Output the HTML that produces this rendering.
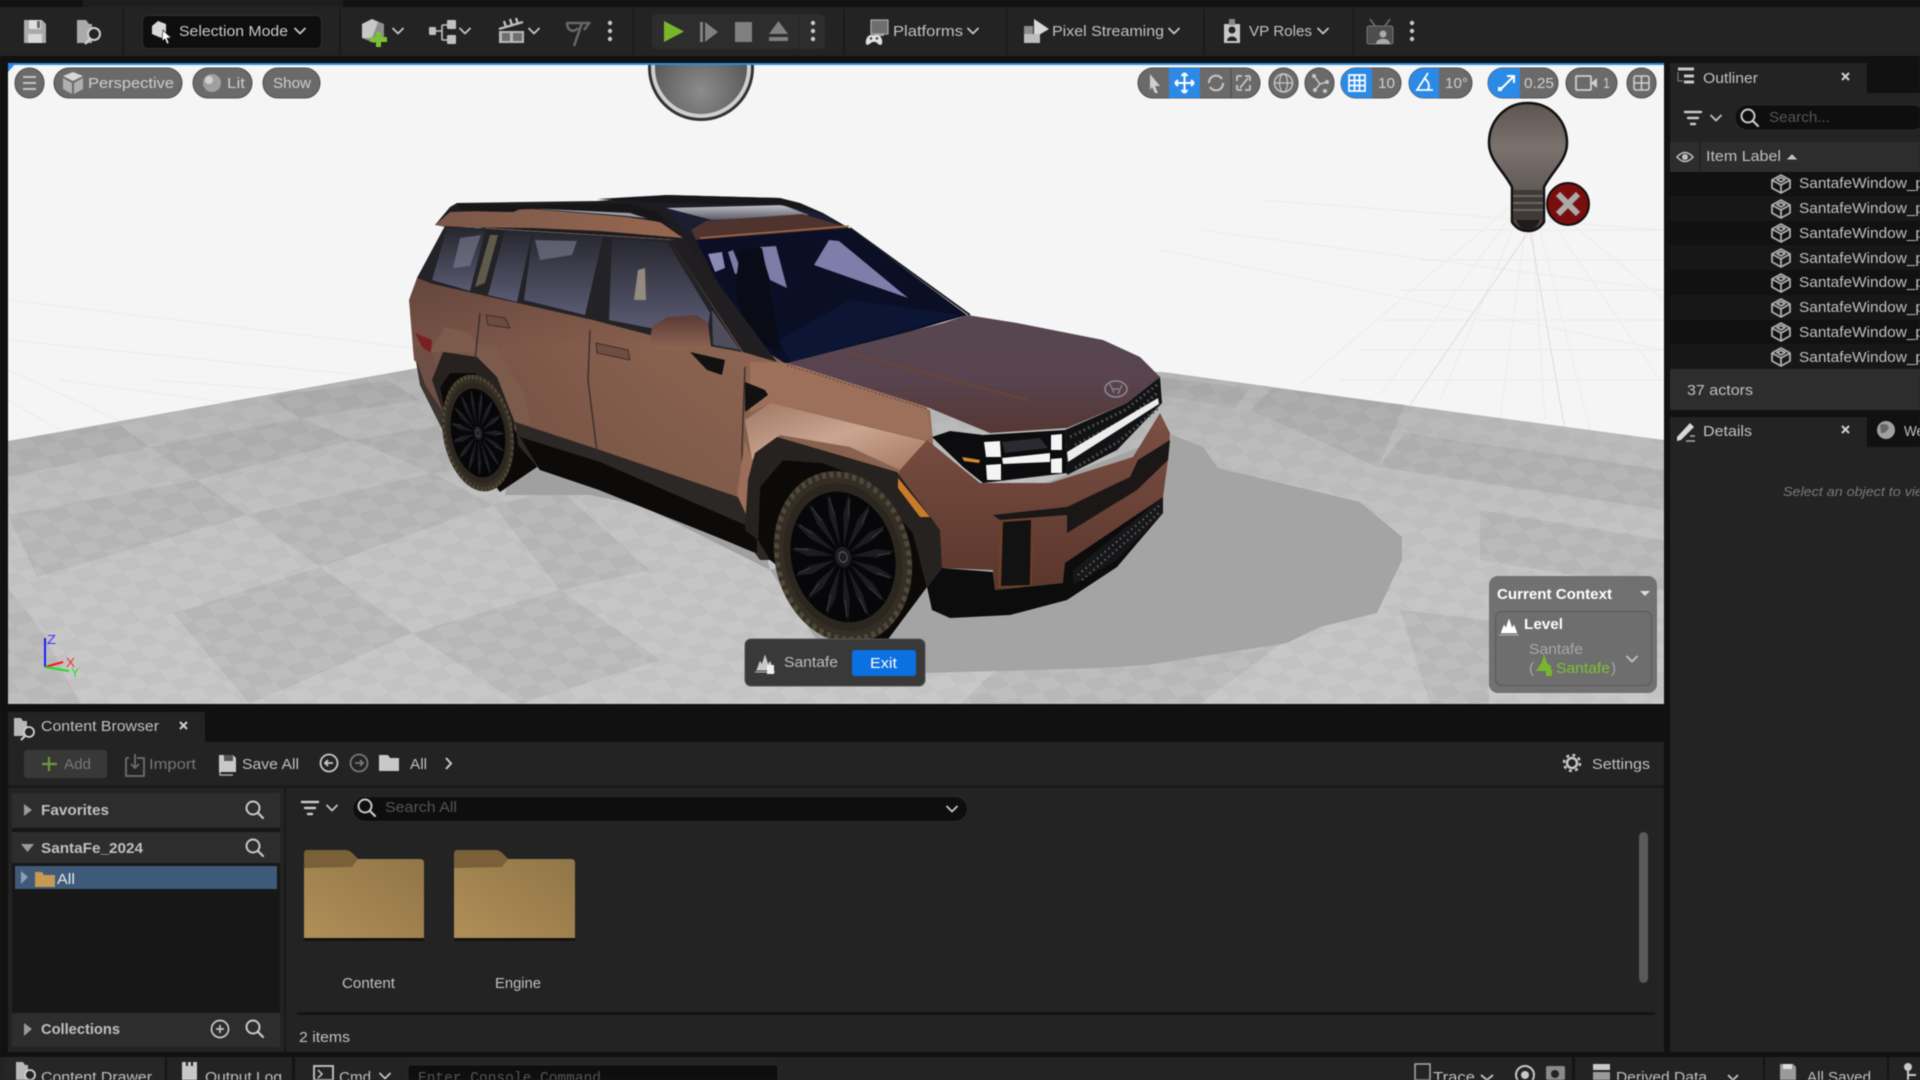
<!DOCTYPE html>
<html lang="en">
<head>
<meta charset="utf-8">
<title>Unreal Editor</title>
<style>
html,body{margin:0;padding:0;width:1920px;height:1080px;overflow:hidden;background:#232323}
svg{display:block;position:absolute;left:0;top:0;filter:blur(.45px)}
text{font-family:"Liberation Sans",sans-serif;font-size:15px;fill:#c0c0c0;white-space:pre}
.dot{fill:#c8c8c8}
</style>
</head>
<body>
<svg width="1920" height="1080" viewBox="0 0 1920 1080" xmlns="http://www.w3.org/2000/svg">
<defs>
<clipPath id="vp"><rect x="8" y="64" width="1656" height="640"/></clipPath>
<radialGradient id="sphere" cx=".5" cy=".75" r=".7"><stop offset="0" stop-color="#8c8c8c"/><stop offset="1" stop-color="#4c4c4c"/></radialGradient>
<linearGradient id="bulb" x1="0" y1="0" x2="0" y2="1"><stop offset="0" stop-color="#5e5450"/><stop offset=".35" stop-color="#7b726e"/><stop offset="1" stop-color="#4a4340"/></linearGradient>
<linearGradient id="side" x1="0" y1="0" x2="1" y2="0"><stop offset="0" stop-color="#745145"/><stop offset=".45" stop-color="#87604e"/><stop offset="1" stop-color="#966b57"/></linearGradient>
<linearGradient id="shade" x1="0" y1="0" x2="0" y2="1"><stop offset="0" stop-color="#2a1a18" stop-opacity=".35"/><stop offset=".35" stop-color="#2a1a18" stop-opacity="0"/><stop offset="1" stop-color="#2a1a18" stop-opacity=".15"/></linearGradient>
<linearGradient id="hood" x1="0" y1="0" x2="0" y2="1"><stop offset="0" stop-color="#574750"/><stop offset=".55" stop-color="#58434e"/><stop offset="1" stop-color="#563733"/></linearGradient>
<linearGradient id="glass" x1="0" y1="0" x2="0" y2="1"><stop offset="0" stop-color="#27272f"/><stop offset="1" stop-color="#5a5a72"/></linearGradient>
<linearGradient id="roof" x1="0" y1="0" x2="1" y2="0"><stop offset="0" stop-color="#7a5749"/><stop offset="1" stop-color="#986850"/></linearGradient>
<linearGradient id="mirror" x1="0" y1="0" x2="0" y2="1"><stop offset="0" stop-color="#5a3b36"/><stop offset="1" stop-color="#8f6553"/></linearGradient>
<linearGradient id="sunroof" x1="0" y1="0" x2="0" y2="1"><stop offset="0" stop-color="#c0c0c6"/><stop offset="1" stop-color="#5a5a66"/></linearGradient>
<linearGradient id="fender" x1="0" y1="0" x2="1" y2="1"><stop offset="0" stop-color="#a07864"/><stop offset=".5" stop-color="#cba591"/><stop offset="1" stop-color="#a5775f"/></linearGradient>
<linearGradient id="bump" x1="0" y1="0" x2="0" y2="1"><stop offset="0" stop-color="#7c5044"/><stop offset="1" stop-color="#5a362b"/></linearGradient>
<linearGradient id="folder" x1="0" y1="1" x2="1" y2="0"><stop offset="0" stop-color="#b08f58"/><stop offset="1" stop-color="#8f7446"/></linearGradient>
<linearGradient id="floorDk" x1="0" y1="0" x2="0" y2="1"><stop offset="0" stop-color="#000" stop-opacity=".10"/><stop offset=".5" stop-color="#000" stop-opacity=".02"/><stop offset="1" stop-color="#000" stop-opacity="0"/></linearGradient>
<pattern id="chk" width="44" height="26" patternUnits="userSpaceOnUse" patternTransform="rotate(-14) skewX(28)">
<rect x="0" y="0" width="22" height="13" fill="#fff" fill-opacity=".09"/>
<rect x="22" y="13" width="22" height="13" fill="#fff" fill-opacity=".09"/>
</pattern>
<g id="cube"><path d="M1 6 L10 1 L19 6 L19 14 L10 19 L1 14 Z M1 6 L10 11 L19 6 M10 11 L10 19 M6 5.5 L10 3.5 L14 5.5 L10 8 Z" fill="none" stroke="#b0b0b0" stroke-width="1.8" stroke-linejoin="round"/></g>
<g id="spoke"><path d="M0 -12 L5 -50 L0 -76 L-5 -50 Z" fill="#1d1d21"/><line x1="2" y1="-50" x2="2" y2="-70" stroke="#3c3c44" stroke-width="1.2"/></g>
<g id="wheel">
<circle r="100" fill="#352e24"/>
<circle r="96" fill="none" stroke="#50483a" stroke-width="7" stroke-dasharray="6 5"/>
<circle r="86" fill="#2b271f"/>
<circle r="76" fill="#070709"/>
<use href="#spoke"/><use href="#spoke" transform="rotate(24)"/><use href="#spoke" transform="rotate(48)"/><use href="#spoke" transform="rotate(72)"/><use href="#spoke" transform="rotate(96)"/><use href="#spoke" transform="rotate(120)"/><use href="#spoke" transform="rotate(144)"/><use href="#spoke" transform="rotate(168)"/><use href="#spoke" transform="rotate(192)"/><use href="#spoke" transform="rotate(216)"/><use href="#spoke" transform="rotate(240)"/><use href="#spoke" transform="rotate(264)"/><use href="#spoke" transform="rotate(288)"/><use href="#spoke" transform="rotate(312)"/><use href="#spoke" transform="rotate(336)"/>
<circle r="12" fill="#1d1d22"/><circle r="6" fill="none" stroke="#55555e" stroke-width="1.5"/>
</g>
<path id="lvl" d="M0 15 L3 7 L5 10 L8 1 L11 10 L13 7 L16 15 Z M-2 17 H18"/>
<g id="chev"><path d="M-5 -2.5 L0 2.5 L5 -2.5" fill="none" stroke="#c4c4c4" stroke-width="1.8" stroke-linecap="round" stroke-linejoin="round"/></g>
<g id="dots"><circle cy="-8" r="2.2" class="dot"/><circle r="2.2" class="dot"/><circle cy="8" r="2.2" class="dot"/></g>
<g id="mag"><circle cx="-2" cy="-2" r="6.5" fill="none" stroke="#c8c8c8" stroke-width="2"/><line x1="3" y1="3" x2="8" y2="8" stroke="#c8c8c8" stroke-width="2.2" stroke-linecap="round"/></g>
<g id="filt"><path d="M-8 -6 H8 M-5 0 H5 M-2 6 H2" stroke="#c8c8c8" stroke-width="2.4" fill="none" stroke-linecap="round"/></g>
</defs>

<!-- base chrome -->
<rect width="1920" height="1080" fill="#111111"/>
<rect x="83" y="0" width="260" height="7" fill="#1e1e1e"/>
<rect x="0" y="7" width="1920" height="49" fill="#232323"/>
<g fill="#1a1a1a"><rect x="122" y="8" width="2" height="47"/><rect x="339" y="8" width="2" height="47"/><rect x="632" y="8" width="2" height="47"/><rect x="843" y="8" width="2" height="47"/><rect x="1006" y="8" width="2" height="47"/><rect x="1203" y="8" width="2" height="47"/><rect x="1352" y="8" width="2" height="47"/></g>

<!-- toolbar -->
<path d="M24 20 H42 L46 24 V43 H24 Z" fill="#aaa"/><rect x="29" y="20" width="12" height="9" fill="#e0e0e0"/><rect x="37" y="21" width="3" height="7" fill="#666"/><rect x="28" y="34" width="14" height="9" fill="#d8d8d8"/>
<path d="M77 20 H86 L89 24 H92 V43 H77 Z" fill="#aaa"/><circle cx="94" cy="34" r="6" fill="#232323" stroke="#d0d0d0" stroke-width="2"/><line x1="90" y1="39" x2="85" y2="44" stroke="#d0d0d0" stroke-width="2.4"/>

<rect x="142.500" y="15.500" width="179" height="33" rx="5" fill="#0e0e0e" stroke="#2f2f2f"/>
<path d="M152 26 L158 21 L166 24 L166 33 L171 37 L165 39 L159 37 L152 34 Z" fill="#d8d8d8"/><path d="M163 30 L171 38 L167 38 L169 43 L167 44 L165 39 L162 41 Z" fill="#fff" stroke="#111" stroke-width=".6"/>
<text x="179" y="36" textLength="109" lengthAdjust="spacingAndGlyphs" style="fill:#c8c8c8">Selection Mode</text>
<use href="#chev" x="300" y="31"/>

<path d="M362 24 L372 19 L384 24 V38 L374 43 L362 38 Z" fill="#8e8e8e"/><path d="M372 19 L378 22 L372 38 L362 38 V24 Z" fill="#c8c8c8"/><path d="M376 32 H381 V37 H387 V42 H381 V47 H376 V42 H370 V37 H376 Z" fill="#7cc234"/>
<use href="#chev" x="398" y="31"/>
<g fill="#c0c0c0"><rect x="429" y="27" width="7" height="8" rx="1"/><rect x="447" y="20" width="9" height="9" rx="1"/><rect x="447" y="35" width="9" height="9" rx="1"/></g><path d="M436 31 H442 M442 25 V40 M442 25 H447 M442 40 H447" stroke="#c0c0c0" stroke-width="1.6" fill="none"/>
<use href="#chev" x="465" y="31"/>
<path d="M499 31 H524 V43 H499 Z" fill="#b8b8b8"/><path d="M502 33 H510 V41 H502 Z M513 33 H522 V41 H513 Z" fill="#6e6e6e"/><path d="M499 29 L523 22 M506 27 L504 21 M512 25 L510 19 M518 24 L516 18" stroke="#bdbdbd" stroke-width="2.4"/>
<use href="#chev" x="534" y="31"/>
<path d="M566 23 H590 M582 23 L574 46 M567 23 C567 31 574 33 578 28 M590 22 L584 30" stroke="#666" stroke-width="2.6" fill="none"/>
<use href="#dots" x="610" y="31"/>

<rect x="652" y="14" width="173" height="35" rx="5" fill="#2d2d2d"/><rect x="798" y="14" width="1" height="35" fill="#232323"/>
<path d="M664 21 L684 31.500 L664 42 Z" fill="#78b72d"/>
<rect x="700" y="22" width="3" height="20" fill="#808080"/><path d="M705 22 L718 32 L705 42 Z" fill="#808080"/>
<rect x="735" y="22" width="17" height="20" fill="#808080"/>
<path d="M778.500 21 L788 34 H769 Z" fill="#808080"/><rect x="769" y="37" width="19" height="4" fill="#808080"/>
<use href="#dots" x="813" y="31"/>

<rect x="871" y="20" width="17" height="14" fill="#6e6e6e" stroke="#aaa" stroke-width="1.200"/><rect x="875" y="34" width="9" height="2" fill="#aaa"/>
<path d="M866 44 C865 39 868 35 871 35 H877 C881 35 883 40 882 44 C880 46 878 44 876 42 H872 C870 44 867 46 866 44 Z" fill="#e0e0e0"/><circle cx="871" cy="38.500" r="1.200" fill="#333"/><circle cx="877" cy="38.500" r="1.200" fill="#333"/>
<text x="893" y="36" textLength="70" lengthAdjust="spacingAndGlyphs">Platforms</text><use href="#chev" x="973" y="31"/>
<path d="M1034 19 L1049 29 L1034 38 Z" fill="#d8d8d8"/><rect x="1024" y="26" width="9" height="11" fill="#8c8c8c"/><rect x="1024" y="34" width="16" height="9" fill="#bdbdbd"/>
<text x="1052" y="36" textLength="112" lengthAdjust="spacingAndGlyphs">Pixel Streaming</text><use href="#chev" x="1174" y="31"/>
<rect x="1224" y="24" width="16" height="19" fill="#c8c8c8"/><rect x="1229" y="19" width="6" height="6" fill="#888"/><circle cx="1232" cy="30" r="3.500" fill="#232323"/><path d="M1227 41 C1227 35 1237 35 1237 41 Z" fill="#232323"/>
<text x="1249" y="36" textLength="63" lengthAdjust="spacingAndGlyphs">VP Roles</text><use href="#chev" x="1323" y="31"/>
<rect x="1367" y="26" width="26" height="18" rx="2" fill="#4d4d4d" stroke="#777"/><path d="M1375 26 L1370 19 M1385 26 L1390 19" stroke="#777" stroke-width="1.5"/><circle cx="1383" cy="34" r="3.500" fill="#aaa"/><path d="M1376 44 C1376 37 1390 37 1390 44 Z" fill="#aaa"/>
<use href="#dots" x="1412" y="31"/>

<!-- VIEWPORT -->
<g clip-path="url(#vp)">
<rect x="8" y="64" width="1656" height="640" fill="#f5f5f5"/>
<g stroke="#ebebeb" stroke-width="1" fill="none">
<path d="M1530 190 L1440 400 M1530 190 L1500 420 M1530 190 L1545 420 M1530 190 L1590 430 M1530 190 L1660 380 M1530 190 L1664 300 M1530 190 L1380 395 M1530 190 L1300 385"/>
<path d="M1440 230 H1664 M1420 260 H1664 M1400 290 H1664 M1380 320 H1664 M1360 350 H1664 M1340 380 H1664"/>
<path d="M8 370 L130 425 M60 380 L230 403 M8 400 L60 430 M150 380 L290 390 M8 340 L360 375 M8 300 L430 350"/>
<path d="M1160 250 L1664 350 M1200 230 L1664 290 M1260 200 L1664 230"/>
</g>
<path d="M1530 230 L1410 405 M1530 230 L1565 430" stroke="#e6d8d8" stroke-width="1"/>
<!-- floor -->
<polygon points="8,441 429,366 1163,372 1440,410 1664,440 1664,704 8,704" fill="#c3c3c3"/>
<g fill="#b8b8b8">
<polygon points="8,441 117,423 150,447 8,477"/>
<polygon points="150,447 300,418 353,440 197,480"/>
<polygon points="8,515 197,480 247,515 37,577"/>
<polygon points="247,515 433,473 493,505 320,567"/>
<polygon points="173,613 320,567 412,633 250,704"/>
<polygon points="8,587 43,633 80,704 8,704"/>
<polygon points="267,397 387,380 420,400 300,418"/>
<polygon points="353,440 440,425 495,465 433,473"/>
<polygon points="493,505 560,490 650,570 560,590"/>
<polygon points="412,633 560,590 660,660 520,704"/>
<polygon points="1273,388 1405,405 1378,467 1250,410"/>
<polygon points="1405,433 1664,470 1664,510 1378,467"/>
<polygon points="1400,610 1489,620 1489,704 1430,704"/>
<polygon points="1070,600 1300,630 1200,704 960,704"/>
<polygon points="1100,370 1250,388 1235,408 1160,395"/>
<polygon points="1480,510 1664,540 1664,590 1480,560"/>
</g>
<polygon points="8,441 429,366 1163,372 1440,410 1664,440 1664,704 8,704" fill="url(#chk)"/>
<polygon points="8,441 429,366 1163,372 1440,410 1664,440 1664,704 8,704" fill="url(#floorDk)"/>
<!-- shadows -->
<polygon points="1172,435 1203,447 1218,468 1360,502 1402,537 1402,560 1377,613 1320,627 1287,643 1147,665 1100,668 925,673 830,660 770,570 1000,500" fill="#a4a4a4"/>
<polygon points="515,435 600,470 760,530 770,570 640,505 590,495 505,495" fill="#a0a0a0"/>

<!-- Sphere -->
<circle cx="701" cy="68" r="53" fill="#333"/><circle cx="701" cy="68" r="50" fill="#cfcfcf"/><circle cx="701" cy="68" r="46" fill="url(#sphere)"/>

<!-- CAR underlay -->
<polygon points="435,225 450,207 457,203 597,201 667,195 780,198 823,213 849,228 967,315 790,367 680,240" fill="#1e1c20"/>
<!-- rear -->
<polygon points="414,350 432,340 445,415 470,480 440,425 420,385" fill="#3e3430"/>
<!-- body side -->
<polygon points="417,278 445,226 680,240 790,365 930,410 945,570 770,520 757,530 600,470 515,440 470,400 430,375 414,360 409,300" fill="url(#side)"/>
<polygon points="417,278 445,226 680,240 790,365 930,410 945,570 770,520 757,530 600,470 515,440 470,400 430,375 414,360 409,300" fill="url(#shade)"/>
<polygon points="414,346 432,350 440,385 445,415 425,385 413,350" fill="#6e4e45"/>
<polygon points="415,333 432,340 431,353 422,347" fill="#7a2020"/>
<!-- rear arch & flare -->
<polygon points="430,352 445,327 470,333 477,345 495,345 525,395 530,425 512,420 497,377 470,352 443,352" fill="#7d5b4c"/>
<polygon points="432,380 443,352 477,357 497,377 515,423 513,440 497,397 475,373 450,373 440,387 443,412" fill="#27221f"/>
<polygon points="440,387 450,373 475,373 497,397 515,430 537,467 500,492 445,420" fill="#0c0a09"/>
<use href="#wheel" transform="translate(478,433) rotate(-10) scale(.35,.59)"/>
<!-- sill -->
<polygon points="515,422 600,450 738,497 780,500 780,560 760,560 755,553 599,487 540,470 518,445" fill="#2c2825"/>
<polygon points="520,437 600,462 757,530 757,553 599,490 540,470" fill="#0d0b0a"/>
<!-- roof -->
<polygon points="663,207 788,203 819,213 849,228 696,240 681,227" fill="#1b1d30"/>
<polygon points="666,208 783,205 809,215 712,220" fill="url(#sunroof)"/>
<polygon points="691,230 706,221 803,214 849,228 696,240" fill="#4f332f"/>
<path d="M700 238 L849 226" stroke="#a56a45" stroke-width="1.5" fill="none"/>
<polygon points="435,225 450,212 533,209 627,217 660,222 683,238 600,231 533,228 445,227" fill="url(#roof)"/>
<polygon points="533,206 627,210 660,220 627,216 540,209" fill="#9a9aa8"/>
<!-- windows frame -->
<polygon points="445,226 670,240 742,352 650,335 593,320 433,284 417,278" fill="#232227"/>
<polygon points="447,228 486,228 470,291 432,280" fill="url(#glass)"/>
<polygon points="460,238 481,235 470,266 453,268" fill="#85859b" fill-opacity=".55"/>
<polygon points="490,235 498,235 485,283 475,287" fill="#5f5a4a"/>
<polygon points="505,230 532,232 517,302 488,295" fill="url(#glass)"/>
<polygon points="533,232 603,237 585,315 524,300" fill="url(#glass)"/>
<polygon points="535,240 577,241 572,255 540,260" fill="#7e7e95" fill-opacity=".6"/>
<polygon points="612,238 667,242 710,313 708,327 650,328 609,320" fill="url(#glass)"/>
<polygon points="638,270 645,268 646,300 634,300" fill="#a99c89" fill-opacity=".8"/>
<polygon points="712,310 740,350 713,345" fill="#4d4d5c"/>
<!-- windshield -->
<polygon points="696,240 849,228 967,315 788,365 747,340" fill="#0a0f25"/>
<polygon points="850,300 960,315 790,362 780,340" fill="#0c1634"/>
<polygon points="814,265 829,240 839,241 908,298" fill="#7e7eaa"/>
<polygon points="708,254 722,252 725,268 715,272" fill="#8a8ab5"/>
<polygon points="728,252 733,250 742,272 735,274" fill="#7c7ca8"/>
<polygon points="760,247 776,246 787,288 770,280" fill="#7c7ca6"/>
<polygon points="740,250 762,248 772,300 780,350 750,340 735,290" fill="#090b16"/>
<polygon points="670,240 685,239 777,362 743,352" fill="#201e20"/>
<line x1="850" y1="228" x2="970" y2="315" stroke="#1a1a1a" stroke-width="2"/>
<!-- roof rails -->
<polygon points="457,203 523,205 627,203 657,212 669,223 658,222 630,213 523,208 513,212 463,211" fill="#17171a"/>
<polygon points="597,199 667,195 780,198 800,203 823,213 815,212 780,205 670,203" fill="#17171a"/>
<!-- door lines & handles -->
<path d="M590 330 L588 380 L598 460 M745 367 L742 447 L743 497 M480 313 L475 360" stroke="#3a2e2a" stroke-width="1.4" fill="none"/>
<path d="M486 315 L505 318 L510 328 L488 325 Z" fill="#6d4c40" stroke="#3e2d28"/>
<path d="M596 343 L628 350 L630 360 L597 353 Z" fill="#6f4d40" stroke="#3e2d28"/>
<!-- mirror -->
<polygon points="690,352 725,360 722,375 707,370" fill="#111"/>
<polygon points="652,327 667,317 697,315 708,323 711,347 657,350 650,340" fill="url(#mirror)"/>
<!-- hood -->
<polygon points="787,363 943,323 967,315 1017,323 1103,340 1140,357 1160,377 1127,403 1067,428 990,433 927,407" fill="url(#hood)"/>
<path d="M850 353 L1027 400" stroke="#6b4533" stroke-width="2" fill="none"/>
<ellipse cx="1116" cy="389" rx="11" ry="8" fill="none" stroke="#8b8b98" stroke-width="1.5"/>
<path d="M1110 384 L1114 393 M1122 385 L1118 394 M1113 389 H1119" stroke="#8b8b98" stroke-width="1.2"/>
<!-- shoulder -->
<polygon points="750,362 787,363 927,407 932,437 926,440 770,403 750,413" fill="#9c705a"/>
<path d="M787 365 L927 409" stroke="#5b3f38" stroke-width="1" stroke-dasharray="2 2" fill="none"/>
<polygon points="745,382 765,390 768,395 745,412" fill="#111"/>
<polygon points="745,420 770,403 926,441 900,470 850,447 780,435 752,460" fill="url(#fender)"/>
<polygon points="737,495 745,440 752,460 760,487 758,540" fill="#9a6e59"/>
<!-- bumper -->
<polygon points="927,440 980,483 1050,483 1133,457 1160,413 1170,433 1168,460 1163,497 1067,563 1063,583 995,590 993,570 942,568 940,530 897,480 900,470" fill="url(#bump)"/>
<!-- front arch -->
<polygon points="777,437 897,472 940,530 942,568 927,587 913,533 867,480 823,463 783,460 760,487 758,540 745,530 748,480 755,453" fill="#26221f"/>
<polygon points="783,460 823,463 867,480 913,533 927,587 880,650 770,560 758,540 760,487" fill="#0c0a09"/>
<polygon points="898,478 930,517 920,517 898,488" fill="#c87c2a"/>
<use href="#wheel" transform="translate(843,557) rotate(-14) scale(.68,.87)"/>
<!-- grille -->
<polygon points="1065,430 1127,403 1160,377 1162,403 1117,450 1067,475" fill="#111214"/>
<path d="M1070 437 L1125 410 L1158 384 M1075 445 L1130 417 L1158 392 M1075 468 L1118 442 L1158 408" stroke="#4a4a4a" stroke-width="3" stroke-dasharray="2 3" fill="none"/>
<polygon points="1067,452 1158,398 1159,404 1068,462" fill="#ececec"/>
<!-- headlight -->
<polygon points="932,437 950,431 983,435 1065,430 1067,473 983,483 963,467" fill="#0c0c0e"/>
<polygon points="1002,442 1040,438 1048,448 1005,453" fill="#2a2a30"/>
<polygon points="984,442 1000,441 1001,457 986,457" fill="#f4f4f4"/>
<polygon points="986,465 1001,464 1001,480 987,480" fill="#f4f4f4"/>
<polygon points="1002,458 1050,453 1050,462 1003,464" fill="#f4f4f4"/>
<polygon points="1051,435 1062,434 1062,450 1051,450" fill="#f4f4f4"/>
<polygon points="1051,459 1062,458 1062,473 1051,473" fill="#f4f4f4"/>
<polygon points="962,457 980,460 979,463 964,461" fill="#d88a2a"/>
<!-- lower -->
<polygon points="1067,507 1130,477 1138,460 1170,440 1168,460 1137,490 1067,533" fill="#1b1716"/>
<polygon points="993,515 1067,507 1067,515 1000,520" fill="#1b1716"/>
<polygon points="1000,520 1033,518 1032,587 998,588" fill="#6e3f2a"/><polygon points="1003,522 1031,520 1030,585 1001,586" fill="#121212"/>
<polygon points="927,587 942,568 993,572 995,590 1063,583 1065,563 1163,497 1163,513 1117,567 1067,600 1010,615 950,618 932,610" fill="#0c0c0c"/>
<polygon points="1073,570 1163,497 1163,513 1117,560 1073,585" fill="#17171a"/>
<path d="M1078 575 L1160 505 M1082 580 L1160 512" stroke="#666" stroke-width="2" stroke-dasharray="1.500 3.500" fill="none"/>

<!-- Bulb -->
<path d="M1528 103 C1506 103 1489 120 1489 143 C1489 160 1503 170 1512 187 L1512 222 Q1518 231 1528 231 Q1538 231 1544 222 L1544 187 C1553 170 1567 160 1567 143 C1567 120 1550 103 1528 103 Z" fill="url(#bulb)" stroke="#111" stroke-width="2.500"/>
<rect x="1513" y="190" width="30" height="30" fill="#3f3a38"/>
<path d="M1513 196 H1543 M1513 203 H1543 M1513 210 H1543" stroke="#6b6462" stroke-width="2"/>
<path d="M1516 220 H1540 Q1536 230 1528 230 Q1520 230 1516 220 Z" fill="#1e1b1a"/>
<circle cx="1568" cy="204" r="21" fill="#7a0d0d" stroke="#111" stroke-width="2"/>
<path d="M1558 194 L1578 214 M1578 194 L1558 214" stroke="#aaa" stroke-width="6"/>

<!-- gizmo -->
<path d="M45 667 V638" stroke="#1d1dff" stroke-width="2"/><path d="M45 667 L63 662" stroke="#f01818" stroke-width="2"/><path d="M45 667 L69 671" stroke="#18e018" stroke-width="2"/>
<text x="47" y="644" style="font-size:13px;fill:#3434ff" textLength="9" lengthAdjust="spacingAndGlyphs">Z</text>
<text x="66" y="667" style="font-size:13px;fill:#f03030" textLength="9" lengthAdjust="spacingAndGlyphs">X</text>
<text x="71" y="677" style="font-size:13px;fill:#20e020" textLength="8" lengthAdjust="spacingAndGlyphs">Y</text>

<!-- viewport pills -->
<g fill="#6a6a6a" stroke="#4d4d4d" stroke-width="1">
<rect x="15" y="68" width="29" height="30" rx="14.500"/>
<rect x="54" y="68" width="128" height="30" rx="15"/>
<rect x="193" y="68" width="59" height="30" rx="15"/>
<rect x="263" y="68" width="57" height="30" rx="15"/>
<rect x="1138" y="68" width="122" height="30" rx="15"/>
<rect x="1269" y="68" width="29" height="30" rx="14.500"/>
<rect x="1305" y="68" width="29" height="30" rx="14.500"/>
<rect x="1341" y="68" width="60" height="30" rx="15"/>
<rect x="1409" y="68" width="63" height="30" rx="15"/>
<rect x="1488" y="68" width="70" height="30" rx="15"/>
<rect x="1566" y="68" width="51" height="30" rx="15"/>
<rect x="1627" y="68" width="29" height="30" rx="14.500"/>
</g>
<path d="M1169 68 H1200 V98 H1169 Z M1356 68 H1372 V98 H1356 A15 15 0 0 1 1356 68 Z M1424 68 H1439 V98 H1424 A15 15 0 0 1 1424 68 Z M1503 68 H1520 V98 H1503 A15 15 0 0 1 1503 68 Z" fill="#2b8ae6"/>
<path d="M1231 68 V98" stroke="#4d4d4d"/>
<path d="M23 77 H36 M23 83 H36 M23 89 H36" stroke="#c4c4c4" stroke-width="2"/>
<path d="M73 72 L83 76 L73 81 L63 76 Z" fill="#d8d8d8"/><path d="M63 78 L72 83 V94 L63 89 Z M83 78 L74 83 V94 L83 89 Z" fill="#b0b0b0"/>
<text x="88" y="88" textLength="86" lengthAdjust="spacingAndGlyphs" style="fill:#cfcfcf">Perspective</text>
<circle cx="212" cy="83" r="9" fill="#a0a0a0"/><circle cx="209" cy="80" r="4" fill="#d0d0d0"/>
<text x="227" y="88" textLength="18" lengthAdjust="spacingAndGlyphs" style="fill:#cfcfcf">Lit</text>
<text x="273" y="88" textLength="38" lengthAdjust="spacingAndGlyphs" style="fill:#cfcfcf">Show</text>
<path d="M1150 74 L1160 86 L1155 86 L1158 93 L1155 93 L1152 87 L1150 90 Z" fill="#d0d0d0"/>
<path d="M1184.500 73 V93 M1175 83 H1194 M1184.500 73 L1181.500 76 M1184.500 73 L1187.500 76 M1184.500 93 L1181.500 90 M1184.500 93 L1187.500 90 M1175 83 L1178 80 M1175 83 L1178 86 M1194 83 L1191 80 M1194 83 L1191 86" stroke="#fff" stroke-width="2" fill="none"/>
<path d="M1209 83 A7 7 0 0 1 1222 79 M1223 83 A7 7 0 0 1 1210 87" stroke="#c8c8c8" stroke-width="2" fill="none"/>
<path d="M1237 76 H1242 M1237 76 V81 M1250 76 H1245 M1250 76 V81 M1237 90 H1242 M1237 90 V85 M1250 90 H1245 M1250 90 V85 M1240 88 L1248 78" stroke="#c8c8c8" stroke-width="1.800" fill="none"/>
<circle cx="1283.500" cy="83" r="9" fill="none" stroke="#c8c8c8" stroke-width="1.500"/><ellipse cx="1283.500" cy="83" rx="4" ry="9" fill="none" stroke="#c8c8c8" stroke-width="1.200"/><path d="M1275 83 H1292" stroke="#c8c8c8" stroke-width="1.200"/>
<path d="M1314 76 L1320 84 L1315 90 M1320 84 L1327 82" stroke="#c8c8c8" stroke-width="1.500" fill="none"/><circle cx="1314" cy="76" r="2" class="dot"/><circle cx="1327" cy="82" r="2" class="dot"/><circle cx="1315" cy="90" r="2" class="dot"/><circle cx="1325" cy="91" r="2" class="dot"/>
<path d="M1349 75 H1365 V91 H1349 Z M1349 80.500 H1365 M1349 85.500 H1365 M1354.500 75 V91 M1359.500 75 V91" stroke="#fff" stroke-width="1.700" fill="none"/>
<text x="1378" y="88" textLength="17" lengthAdjust="spacingAndGlyphs" style="fill:#cfcfcf">10</text>
<path d="M1433 90 H1417 L1428 73 M1424 78 Q1431 83 1428 90" stroke="#fff" stroke-width="1.800" fill="none"/>
<text x="1445" y="88" textLength="23" lengthAdjust="spacingAndGlyphs" style="fill:#cfcfcf">10°</text>
<path d="M1500 90 L1513 77 M1507 76 H1514 V83" stroke="#fff" stroke-width="2" fill="none"/><rect x="1498" y="87" width="4" height="4" fill="#fff"/>
<text x="1524" y="88" textLength="30" lengthAdjust="spacingAndGlyphs" style="fill:#cfcfcf">0.25</text>
<rect x="1576" y="76" width="15" height="14" rx="1" fill="none" stroke="#cfcfcf" stroke-width="1.800"/><path d="M1591 83 L1597 78 V88 Z" fill="#cfcfcf"/>
<text x="1603" y="88" textLength="7" lengthAdjust="spacingAndGlyphs" style="fill:#cfcfcf">1</text>
<rect x="1634" y="76" width="15" height="14" rx="2" fill="none" stroke="#cfcfcf" stroke-width="1.600"/><path d="M1634 83 H1649 M1641.500 76 V90" stroke="#cfcfcf" stroke-width="1.600"/>

<!-- Santafe exit -->
<rect x="745" y="639" width="180" height="47" rx="6" fill="#393939" stroke="#555"/>
<use href="#lvl" x="757" y="655" fill="#c8c8c8" stroke="#c8c8c8"/><rect x="767" y="665" width="7" height="9" fill="#eee"/>
<text x="784" y="667" textLength="54" lengthAdjust="spacingAndGlyphs" style="fill:#bdbdbd">Santafe</text>
<rect x="852" y="650" width="64" height="26" rx="3" fill="#0b70e0"/>
<text x="870" y="668" textLength="27" lengthAdjust="spacingAndGlyphs" style="fill:#fff">Exit</text>

<!-- Current context -->
<rect x="1489" y="576" width="168" height="117" rx="9" fill="#6a6a6a" fill-opacity=".93"/>
<rect x="1495.500" y="611.500" width="156" height="74" rx="6" fill="#6e6e6e" stroke="#575757"/>
<text x="1497" y="599" textLength="115" lengthAdjust="spacingAndGlyphs" style="fill:#fff;font-weight:bold">Current Context</text>
<path d="M1640 591 H1650 L1645 596 Z" fill="#ddd"/>
<use href="#lvl" x="1501" y="618" fill="#fff" stroke="#fff" stroke-width=".5"/>
<text x="1524" y="629" textLength="39" lengthAdjust="spacingAndGlyphs" style="fill:#fff;font-weight:bold">Level</text>
<text x="1529" y="654" textLength="54" lengthAdjust="spacingAndGlyphs" style="fill:#a8a8a8">Santafe</text>
<text x="1529" y="673" style="fill:#a8a8a8">(</text>
<path d="M1538 668 L1542 662 L1544 654 L1547 663 L1551 666 V671 H1536 Z" fill="#78b72d"/><rect x="1546" y="670" width="6" height="6" fill="#78b72d"/>
<text x="1556" y="673" textLength="54" lengthAdjust="spacingAndGlyphs" style="fill:#7cc234">Santafe</text>
<text x="1611" y="673" style="fill:#a8a8a8">)</text>
<use href="#chev" x="1632" y="659"/>
</g>
<!-- viewport edges -->
<rect x="8" y="63" width="1656" height="2" fill="#2b8ae6"/>
<path d="M8 63 H16 L8 72 Z" fill="#2b8ae6"/>

<!-- OUTLINER -->
<rect x="1670" y="63" width="197" height="30" fill="#232323"/>
<rect x="1670" y="93" width="250" height="49" fill="#232323"/>
<path d="M1678 69 H1694 M1684 76 H1694 M1684 82 H1694" stroke="#c8c8c8" stroke-width="3"/><path d="M1678 72 V81 H1683" stroke="#8a8a8a" fill="none"/>
<text x="1703" y="83" textLength="55" lengthAdjust="spacingAndGlyphs">Outliner</text>
<path d="M1842 73 L1849 80 M1849 73 L1842 80" stroke="#d0d0d0" stroke-width="2"/>
<use href="#filt" x="1693" y="118"/><use href="#chev" x="1716" y="118"/>
<rect x="1735" y="105" width="190" height="25" rx="12" fill="#0e0e0e" stroke="#2a2a2a"/>
<use href="#mag" x="1750" y="118"/>
<text x="1769" y="122" textLength="61" lengthAdjust="spacingAndGlyphs" style="fill:#555">Search...</text>
<rect x="1670" y="142" width="250" height="30" fill="#2d2d2d"/>
<rect x="1699" y="142" width="2" height="30" fill="#232323"/>
<path d="M1677 157 Q1685 148 1693 157 Q1685 166 1677 157 Z" fill="none" stroke="#c0c0c0" stroke-width="1.500"/><circle cx="1685" cy="157" r="3" fill="#c0c0c0"/>
<text x="1706" y="161" textLength="75" lengthAdjust="spacingAndGlyphs">Item Label</text>
<path d="M1788 159 L1792 155 L1796 159 Z" fill="#c8c8c8" stroke="#c8c8c8"/>
<rect x="1670" y="172" width="250" height="197" fill="#111111"/>
<g fill="#171717"><rect x="1670" y="196" width="250" height="25"/><rect x="1670" y="245" width="250" height="25"/><rect x="1670" y="295" width="250" height="25"/><rect x="1670" y="344" width="250" height="25"/></g>
<use href="#cube" x="1771" y="174"/><text x="1799" y="188" textLength="125" lengthAdjust="spacingAndGlyphs">SantafeWindow_p</text>
<use href="#cube" x="1771" y="199"/><text x="1799" y="213" textLength="125" lengthAdjust="spacingAndGlyphs">SantafeWindow_p</text>
<use href="#cube" x="1771" y="223"/><text x="1799" y="238" textLength="125" lengthAdjust="spacingAndGlyphs">SantafeWindow_p</text>
<use href="#cube" x="1771" y="248"/><text x="1799" y="263" textLength="125" lengthAdjust="spacingAndGlyphs">SantafeWindow_p</text>
<use href="#cube" x="1771" y="273"/><text x="1799" y="287" textLength="125" lengthAdjust="spacingAndGlyphs">SantafeWindow_p</text>
<use href="#cube" x="1771" y="298"/><text x="1799" y="312" textLength="125" lengthAdjust="spacingAndGlyphs">SantafeWindow_p</text>
<use href="#cube" x="1771" y="322"/><text x="1799" y="337" textLength="125" lengthAdjust="spacingAndGlyphs">SantafeWindow_p</text>
<use href="#cube" x="1771" y="347"/><text x="1799" y="362" textLength="125" lengthAdjust="spacingAndGlyphs">SantafeWindow_p</text>
<rect x="1670" y="369" width="250" height="41" fill="#2d2d2d"/>
<text x="1687" y="395" textLength="66" lengthAdjust="spacingAndGlyphs">37 actors</text>

<!-- DETAILS -->
<rect x="1670" y="417" width="197" height="30" fill="#232323"/>
<rect x="1670" y="447" width="250" height="605" fill="#232323"/>
<path d="M1677 437 L1690 423 L1694 427 L1681 440 L1677 441 Z" fill="#d8d8d8"/><path d="M1686 441 H1695 M1690 436 H1695" stroke="#aaa" stroke-width="1.500"/>
<text x="1703" y="436" textLength="49" lengthAdjust="spacingAndGlyphs">Details</text>
<path d="M1842 426 L1849 433 M1849 426 L1842 433" stroke="#d0d0d0" stroke-width="2"/>
<circle cx="1886" cy="430" r="9" fill="#a0a0a0"/><path d="M1880 425 Q1887 422 1889 428 Q1885 434 1881 433 Z" fill="#666"/>
<text x="1904" y="436" textLength="20" lengthAdjust="spacingAndGlyphs">We</text>
<text x="1783" y="496" textLength="140" lengthAdjust="spacingAndGlyphs" style="fill:#7a7a7a;font-style:italic;font-size:13px">Select an object to vie</text>

<!-- CONTENT BROWSER -->
<rect x="8" y="712" width="197" height="30" fill="#232323"/>
<rect x="8" y="742" width="1656" height="310" fill="#232323"/>
<path d="M14 718 H21 L23 721 H27 V736 H14 Z" fill="#b8b8b8"/><circle cx="29" cy="732" r="5" fill="#232323" stroke="#d0d0d0" stroke-width="1.800"/><line x1="25" y1="736" x2="21" y2="740" stroke="#d0d0d0" stroke-width="2"/>
<text x="41" y="731" textLength="118" lengthAdjust="spacingAndGlyphs">Content Browser</text>
<path d="M180 722 L187 729 M187 722 L180 729" stroke="#d0d0d0" stroke-width="2"/>
<rect x="24" y="750" width="83" height="28" rx="3" fill="#383838"/>
<path d="M49 757 V771 M42 764 H57" stroke="#6c9a3a" stroke-width="2.200"/>
<text x="64" y="769" textLength="27" lengthAdjust="spacingAndGlyphs" style="fill:#777">Add</text>
<path d="M126 758 H129 M137 758 H144 V776 H126 V758 M135 754 V768 M131 764 L135 768 L139 764" stroke="#6e6e6e" stroke-width="1.800" fill="none"/>
<text x="149" y="769" textLength="47" lengthAdjust="spacingAndGlyphs" style="fill:#777">Import</text>
<path d="M219 755 H233 L236 758 V772 H219 Z" fill="#c8c8c8"/><rect x="224" y="755" width="9" height="6" fill="#555"/><path d="M220 772 V775 H233" stroke="#aaa" fill="none" stroke-width="1.500"/>
<text x="242" y="769" textLength="57" lengthAdjust="spacingAndGlyphs">Save All</text>
<circle cx="329" cy="763" r="8.500" fill="none" stroke="#c8c8c8" stroke-width="1.800"/><path d="M333 763 H325 M328 760 L325 763 L328 766" stroke="#c8c8c8" stroke-width="1.800" fill="none"/>
<circle cx="359" cy="763" r="8.500" fill="none" stroke="#777" stroke-width="1.800"/><path d="M355 763 H363 M360 760 L363 763 L360 766" stroke="#777" stroke-width="1.800" fill="none"/>
<path d="M379 755 H388 L390 758 H399 V771 H379 Z" fill="#c8c8c8"/>
<text x="410" y="769" textLength="17" lengthAdjust="spacingAndGlyphs">All</text>
<path d="M446 758 L451 763.500 L446 769" stroke="#c8c8c8" stroke-width="2" fill="none"/>
<circle cx="1572" cy="763" r="5" fill="none" stroke="#c8c8c8" stroke-width="2.500"/><circle cx="1572" cy="763" r="8" fill="none" stroke="#c8c8c8" stroke-width="2.500" stroke-dasharray="3 3.300"/>
<text x="1592" y="769" textLength="58" lengthAdjust="spacingAndGlyphs">Settings</text>
<rect x="8" y="785" width="1656" height="3" fill="#191919"/>
<!-- left tree -->
<rect x="12" y="793" width="268" height="35" fill="#2d2d2d"/>
<rect x="12" y="828" width="268" height="4" fill="#161616"/>
<rect x="12" y="832" width="268" height="31" fill="#2d2d2d"/>
<rect x="12" y="863" width="268" height="150" fill="#171717"/>
<rect x="15" y="866" width="262" height="23" fill="#3f5a78"/>
<rect x="12" y="1013" width="268" height="34" fill="#2d2d2d"/>
<rect x="284" y="788" width="2" height="264" fill="#191919"/>
<path d="M24 804 L32 810 L24 816 Z" fill="#9a9a9a"/>
<text x="41" y="815" textLength="68" lengthAdjust="spacingAndGlyphs" style="font-weight:bold">Favorites</text>
<use href="#mag" x="255" y="810"/>
<path d="M21 844 H34 L27.500 852 Z" fill="#9a9a9a"/>
<text x="41" y="853" textLength="102" lengthAdjust="spacingAndGlyphs" style="font-weight:bold">SantaFe_2024</text>
<use href="#mag" x="255" y="848"/>
<path d="M21 871 L28 877 L21 884 Z" fill="#8c9fb4"/>
<path d="M35 872 H42 L44 875 H55 V887 H35 Z" fill="#c49a55"/>
<text x="57" y="884" textLength="18" lengthAdjust="spacingAndGlyphs" style="fill:#e8e8e8">All</text>
<path d="M24 1023 L32 1029 L24 1036 Z" fill="#9a9a9a"/>
<text x="41" y="1034" textLength="79" lengthAdjust="spacingAndGlyphs" style="font-weight:bold">Collections</text>
<circle cx="220" cy="1029" r="8.500" fill="none" stroke="#c8c8c8" stroke-width="1.700"/><path d="M220 1025 V1033 M216 1029 H224" stroke="#c8c8c8" stroke-width="1.700"/>
<use href="#mag" x="255" y="1029"/>
<!-- search -->
<use href="#filt" x="310" y="808"/><use href="#chev" x="332" y="808"/>
<rect x="352.500" y="796.500" width="615" height="25" rx="12.500" fill="#0e0e0e" stroke="#2a2a2a"/>
<use href="#mag" x="367" y="808"/>
<text x="385" y="812" textLength="72" lengthAdjust="spacingAndGlyphs" style="fill:#555">Search All</text>
<use href="#chev" x="952" y="809"/>
<!-- folders -->
<path d="M304 854 Q304 850 308 850 H345 Q349 850 352 853 L358 859 H420 Q424 859 424 863 V938 H304 Z" fill="url(#folder)"/>
<path d="M304 868 V854 Q304 850 308 850 H345 Q349 850 352 853 L358 859 L352 867 Z" fill="#7a6038"/>
<rect x="304" y="938" width="120" height="3" fill="#141210"/>
<path d="M454 854 Q454 850 458 850 H495 Q499 850 502 853 L508 859 H571 Q575 859 575 863 V938 H454 Z" fill="url(#folder)"/>
<path d="M454 868 V854 Q454 850 458 850 H495 Q499 850 502 853 L508 859 L502 867 Z" fill="#7a6038"/>
<rect x="454" y="938" width="121" height="3" fill="#141210"/>
<text x="342" y="988" textLength="53" lengthAdjust="spacingAndGlyphs">Content</text>
<text x="495" y="988" textLength="46" lengthAdjust="spacingAndGlyphs">Engine</text>
<rect x="297" y="1012" width="1358" height="3" fill="#131313"/>
<text x="299" y="1042" textLength="51" lengthAdjust="spacingAndGlyphs">2 items</text>
<rect x="1639" y="832" width="9" height="151" rx="4.500" fill="#5a5a5a"/>

<!-- BOTTOM BAR -->
<rect x="0" y="1052" width="1920" height="5" fill="#111"/>
<rect x="0" y="1057" width="1920" height="23" fill="#232323"/>
<rect x="4" y="1057" width="161" height="23" fill="#262626"/>
<g fill="#141414"><rect x="165" y="1057" width="2" height="23"/><rect x="292" y="1057" width="3" height="23"/><rect x="1572" y="1057" width="3" height="23"/><rect x="1763" y="1057" width="2" height="23"/><rect x="1887" y="1057" width="2" height="23"/></g>
<path d="M16 1062 H23 L25 1065 H28 V1080 H16 Z" fill="#b8b8b8"/><circle cx="30" cy="1075" r="5" fill="#232323" stroke="#d0d0d0" stroke-width="1.800"/>
<text x="41" y="1082" textLength="111" lengthAdjust="spacingAndGlyphs">Content Drawer</text>
<path d="M182 1062 V1080 H197 V1062 H193 V1066 H191 V1062 H188 V1066 H186 V1062 Z" fill="#c8c8c8"/>
<text x="205" y="1082" textLength="77" lengthAdjust="spacingAndGlyphs">Output Log</text>
<rect x="314" y="1066" width="19" height="14" fill="none" stroke="#c8c8c8" stroke-width="1.800"/><path d="M318 1070 L322 1074 L318 1078" stroke="#c8c8c8" fill="none" stroke-width="1.500"/>
<text x="339" y="1082" textLength="32" lengthAdjust="spacingAndGlyphs">Cmd</text><use href="#chev" x="385" y="1076"/>
<rect x="408" y="1065" width="370" height="20" rx="3" fill="#0e0e0e" stroke="#2a2a2a"/>
<text x="418" y="1082" textLength="183" lengthAdjust="spacingAndGlyphs" style="fill:#555;font-family:'Liberation Mono',monospace">Enter Console Command</text>
<rect x="1415" y="1064" width="15" height="16" fill="none" stroke="#aaa" stroke-width="1.500"/>
<text x="1433" y="1082" textLength="42" lengthAdjust="spacingAndGlyphs">Trace</text><path d="M1481 1075 L1487 1080 L1493 1075" stroke="#c4c4c4" stroke-width="1.800" fill="none"/>
<circle cx="1525" cy="1075" r="9" fill="none" stroke="#c8c8c8" stroke-width="2"/><circle cx="1525" cy="1075" r="4" fill="#c8c8c8"/>
<rect x="1546" y="1066" width="19" height="14" rx="2" fill="#8a8a8a"/><circle cx="1555" cy="1074" r="4" fill="#232323"/>
<rect x="1593" y="1064" width="17" height="6" fill="#c8c8c8"/><rect x="1593" y="1072" width="17" height="8" fill="#9a9a9a"/>
<text x="1616" y="1082" textLength="91" lengthAdjust="spacingAndGlyphs">Derived Data</text><path d="M1728 1075 L1733 1080 L1738 1075" stroke="#c4c4c4" stroke-width="1.800" fill="none"/>
<path d="M1780 1064 H1793 L1796 1067 V1080 H1780 Z" fill="#9a9a9a"/><rect x="1783" y="1064" width="9" height="5" fill="#dedede"/>
<text x="1807" y="1082" textLength="64" lengthAdjust="spacingAndGlyphs">All Saved</text>
<circle cx="1908" cy="1067" r="4" fill="#c8c8c8"/><path d="M1908 1070 V1080 M1908 1075 H1916" stroke="#c8c8c8" stroke-width="2"/>
</svg>
</body>
</html>
